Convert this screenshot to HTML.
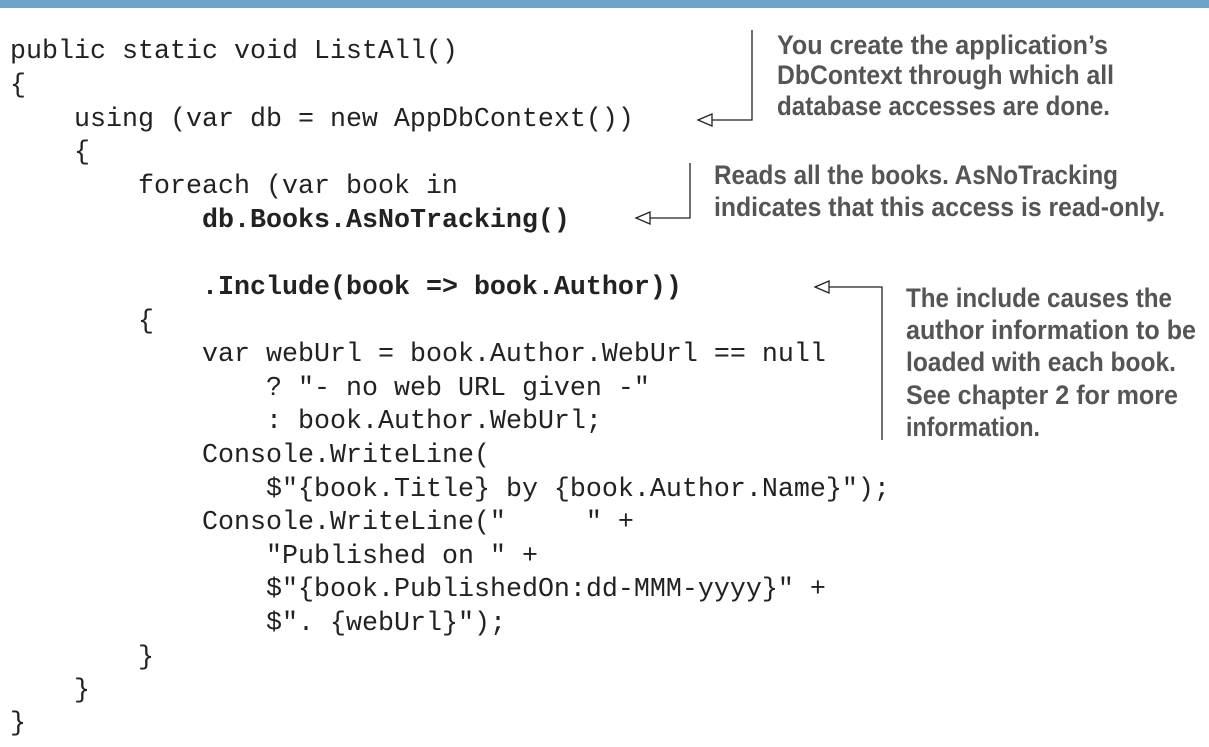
<!DOCTYPE html>
<html><head><meta charset="utf-8"><style>
html,body{margin:0;padding:0;background:#fff;width:1209px;height:747px;overflow:hidden}
.code text{white-space:pre}
</style></head><body>
<svg width="1209" height="747" xmlns="http://www.w3.org/2000/svg">
<rect x="0" y="0" width="1209" height="8" fill="#6fa3c8"/>
<g class="code" font-family="Liberation Mono, monospace" font-size="26.67" fill="#222" style="white-space:pre">
<text x="10" y="58">public static void ListAll()</text>
<text x="10" y="92">{</text>
<text x="74" y="126">using (var db = new AppDbContext())</text>
<text x="74" y="159">{</text>
<text x="138" y="193">foreach (var book in</text>
<text x="202" y="227" font-weight="bold">db.Books.AsNoTracking()</text>
<text x="202" y="294" font-weight="bold">.Include(book =&gt; book.Author))</text>
<text x="138" y="328">{</text>
<text x="202" y="361">var webUrl = book.Author.WebUrl == null</text>
<text x="266" y="395">? "- no web URL given -"</text>
<text x="266" y="428">: book.Author.WebUrl;</text>
<text x="202" y="462">Console.WriteLine(</text>
<text x="266" y="496">$"{book.Title} by {book.Author.Name}");</text>
<text x="202" y="529">Console.WriteLine("     " +</text>
<text x="266" y="563">"Published on " +</text>
<text x="266" y="596">$"{book.PublishedOn:dd-MMM-yyyy}" +</text>
<text x="266" y="630">$". {webUrl}");</text>
<text x="138" y="664">}</text>
<text x="74" y="697">}</text>
<text x="10" y="730">}</text>
</g>
<g font-family="Liberation Sans Narrow, Liberation Sans, sans-serif" font-weight="bold" font-size="27" fill="#555">
<text x="777" y="54" textLength="331" lengthAdjust="spacingAndGlyphs">You create the application’s</text>
<text x="777" y="84" textLength="337" lengthAdjust="spacingAndGlyphs">DbContext through which all</text>
<text x="777" y="115" textLength="333" lengthAdjust="spacingAndGlyphs">database accesses are done.</text>
<text x="714" y="184" textLength="404" lengthAdjust="spacingAndGlyphs">Reads all the books. AsNoTracking</text>
<text x="714" y="216" textLength="451" lengthAdjust="spacingAndGlyphs">indicates that this access is read-only.</text>
<text x="906" y="307" textLength="266" lengthAdjust="spacingAndGlyphs">The include causes the</text>
<text x="906" y="339" textLength="290" lengthAdjust="spacingAndGlyphs">author information to be</text>
<text x="906" y="371" textLength="270" lengthAdjust="spacingAndGlyphs">loaded with each book.</text>
<text x="906" y="404" textLength="272" lengthAdjust="spacingAndGlyphs">See chapter 2 for more</text>
<text x="906" y="436" textLength="134" lengthAdjust="spacingAndGlyphs">information.</text>
</g>
<g stroke="#222" stroke-width="1.3" fill="#fff">
<polyline points="752,30 752,120 712,120" fill="none"/>
<polygon points="698,120 712,114 712,126"/>
<polyline points="690,163 690,218 650,218" fill="none"/>
<polygon points="636,218 650,212 650,224"/>
<polyline points="882,440 882,287 829,287" fill="none"/>
<polygon points="815,287 829,281 829,293"/>
</g>
</svg>
</body></html>
